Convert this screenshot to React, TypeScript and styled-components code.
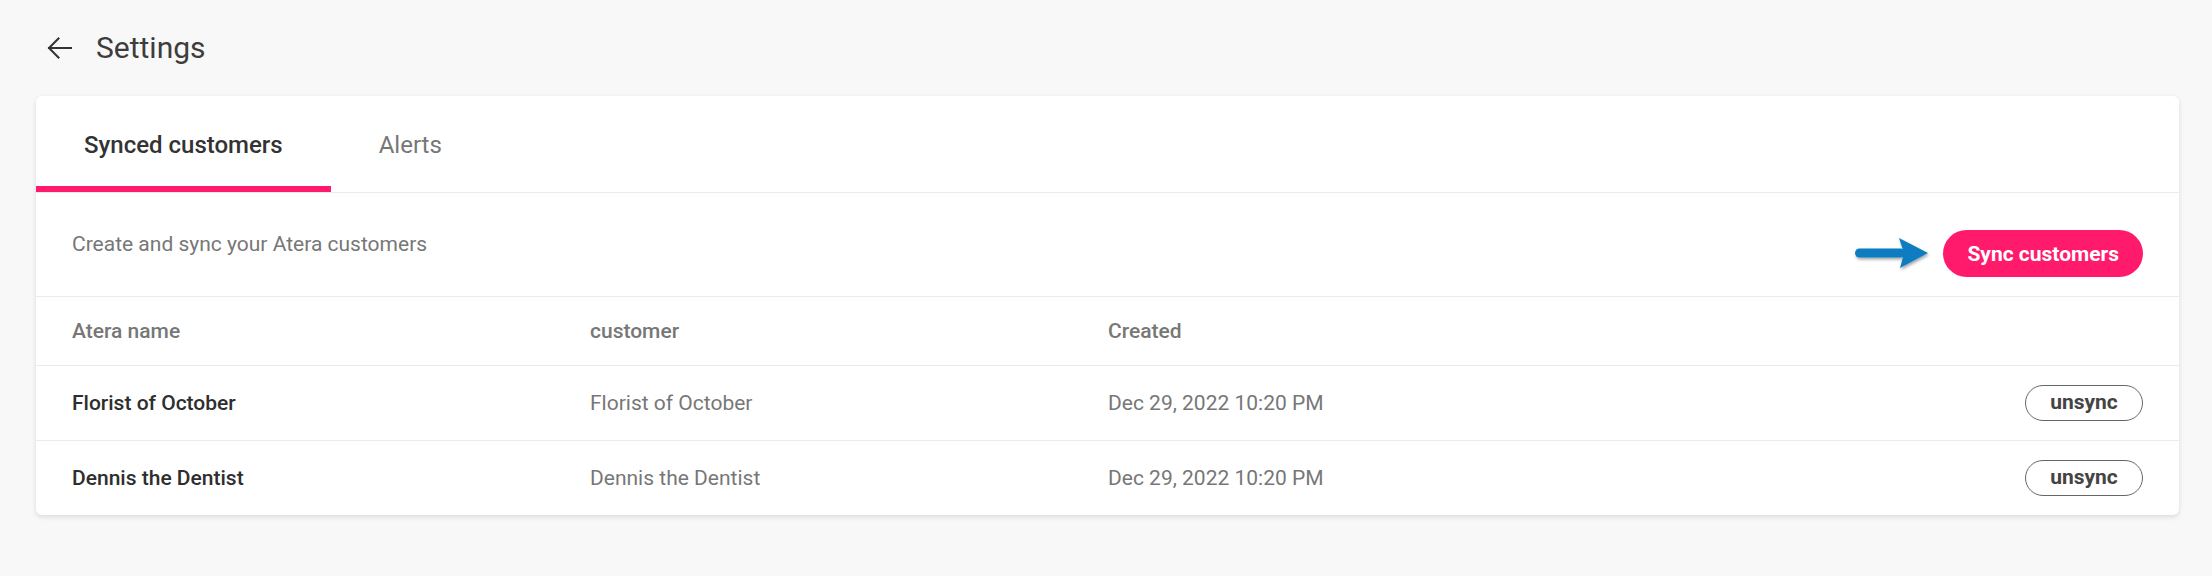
import styled, { createGlobalStyle } from "styled-components";

const GlobalStyle = createGlobalStyle`
body {
  margin: 0;
  background: #f8f8f8;
  font-family: Roboto, "Liberation Sans", Arial, sans-serif;
}
`;

const Page = styled.div`
  padding: 0 33px 0 36px;
  min-height: 576px;
  box-sizing: border-box;
`;

const Header = styled.header`
  height: 96px;
  display: flex;
  align-items: center;
  padding-left: 11px;
  gap: 24px;
`;

const BackButton = styled.button`
  border: none;
  background: none;
  padding: 0;
  display: flex;
  align-items: center;
  cursor: pointer;
`;

const Title = styled.h1`
  margin: 0 0 2px;
  font-size: 30px;
  font-weight: 400;
  color: #3d3d3d;
`;

const Card = styled.section`
  background: #fff;
  border-radius: 6px;
  box-shadow: 0 2px 5px rgba(0, 0, 0, 0.12);
  overflow: hidden;
`;

const TabBar = styled.nav`
  display: flex;
  border-bottom: 1px solid #ebebeb;
`;

const Tab = styled.button<{ $active?: boolean }>`
  height: 96px;
  padding: 2px 48px 0;
  border: none;
  background: none;
  font-family: inherit;
  font-size: 24px;
  font-weight: ${(p) => (p.$active ? 500 : 400)};
  color: ${(p) => (p.$active ? "#333" : "#777")};
  box-shadow: ${(p) => (p.$active ? "inset 0 -6px 0 #ff1a6c" : "none")};
  cursor: pointer;
`;

const Toolbar = styled.div`
  height: 104px;
  box-sizing: border-box;
  display: flex;
  align-items: flex-start;
  justify-content: space-between;
  padding: 37px 36px 0;
  border-bottom: 1px solid #ebebeb;
`;

const Description = styled.p`
  margin: 0;
  font-size: 21px;
  line-height: 29px;
  color: #777;
`;

const Actions = styled.div`
  display: flex;
  align-items: center;
  gap: 13px;
`;

const PrimaryButton = styled.button`
  height: 47px;
  padding: 0 24px;
  border: none;
  border-radius: 24px;
  background: #ff1a6c;
  color: #fff;
  font-family: inherit;
  font-size: 21px;
  font-weight: 700;
  cursor: pointer;
`;

const Row = styled.div<{ $header?: boolean; $last?: boolean }>`
  display: grid;
  grid-template-columns: 518px 518px 518px 1fr;
  align-items: center;
  height: ${(p) => (p.$header ? 69 : p.$last ? 74 : 75)}px;
  box-sizing: border-box;
  padding: 0 36px;
  border-bottom: ${(p) => (p.$last ? "none" : "1px solid #ebebeb")};
`;

const HeadCell = styled.div`
  font-size: 21px;
  font-weight: 500;
  color: #777;
`;

const Cell = styled.div<{ $strong?: boolean }>`
  font-size: 21px;
  font-weight: ${(p) => (p.$strong ? 500 : 400)};
  color: ${(p) => (p.$strong ? "#2e2e2e" : "#777")};
`;

const ActionCell = styled.div`
  display: flex;
  justify-content: flex-end;
`;

const OutlineButton = styled.button`
  width: 118px;
  height: 36px;
  border: 1px solid #666;
  border-radius: 18px;
  background: #fff;
  color: #444;
  font-family: inherit;
  font-size: 21px;
  font-weight: 700;
  padding: 0 0 2px;
  cursor: pointer;
`;

const customers = [
  { id: 1, atera: "Florist of October", customer: "Florist of October", created: "Dec 29, 2022 10:20 PM" },
  { id: 2, atera: "Dennis the Dentist", customer: "Dennis the Dentist", created: "Dec 29, 2022 10:20 PM" },
];

function BackIcon() {
  return (
    <svg width="25" height="22" viewBox="0 0 25 22" fill="none" stroke="#333" strokeWidth="2" strokeLinecap="square">
      <path d="M2 11H24" />
      <path d="M11.5 1.5L2 11L11.5 20.5" />
    </svg>
  );
}

function PointerArrow() {
  return (
    <svg width="78" height="38" viewBox="0 0 78 38">
      <defs>
        <filter id="arrowShadow" x="-20%" y="-30%" width="140%" height="160%">
          <feDropShadow dx="1" dy="2" stdDeviation="1.5" floodColor="#000" floodOpacity="0.35" />
        </filter>
      </defs>
      <g filter="url(#arrowShadow)" fill="#0d7cc1">
        <rect x="3" y="13.5" width="50" height="9" rx="4.5" />
        <path d="M47 3L76 18L48 33L52 18Z" />
      </g>
    </svg>
  );
}

export default function App() {
  return (
    <>
      <GlobalStyle />
      <Page>
        <Header>
          <BackButton aria-label="Back">
            <BackIcon />
          </BackButton>
          <Title>Settings</Title>
        </Header>
        <Card>
          <TabBar>
            <Tab $active>Synced customers</Tab>
            <Tab>Alerts</Tab>
          </TabBar>
          <Toolbar>
            <Description>Create and sync your Atera customers</Description>
            <Actions>
              <PointerArrow />
              <PrimaryButton>Sync customers</PrimaryButton>
            </Actions>
          </Toolbar>
          <Row $header>
            <HeadCell>Atera name</HeadCell>
            <HeadCell>customer</HeadCell>
            <HeadCell>Created</HeadCell>
            <HeadCell />
          </Row>
          {customers.map((c, i) => (
            <Row key={c.id} $last={i === customers.length - 1}>
              <Cell $strong>{c.atera}</Cell>
              <Cell>{c.customer}</Cell>
              <Cell>{c.created}</Cell>
              <ActionCell>
                <OutlineButton>unsync</OutlineButton>
              </ActionCell>
            </Row>
          ))}
        </Card>
      </Page>
    </>
  );
}
